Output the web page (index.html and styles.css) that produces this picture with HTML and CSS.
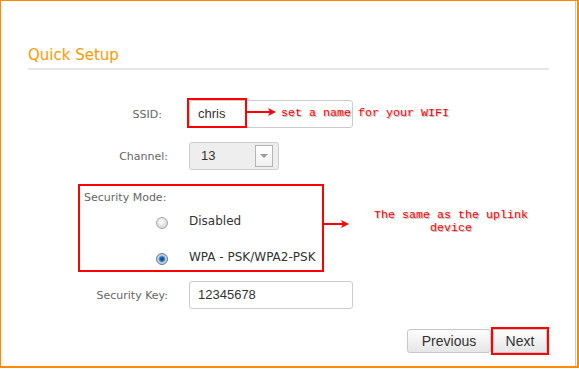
FILE: index.html
```html
<!DOCTYPE html>
<html>
<head>
<meta charset="utf-8">
<title>Quick Setup</title>
<link rel="stylesheet" href="styles.css">
</head>
<body>
<div class="frame">
  <div class="panel">
    <div class="content">
      <h1 class="title">Quick Setup</h1>

      <div class="row row-ssid">
        <div class="lbl lbl-ssid">SSID:</div>
        <div class="field">
          <div class="input">chris</div>
          <span class="hl-box"></span>
          <svg class="arrow arrow-ssid" width="32" height="10" viewBox="0 0 32 10">
            <line x1="0" y1="5" x2="26" y2="5" stroke="#f00" stroke-width="2"/>
            <polygon points="22,1 30,5 22,9 24,5" fill="#f00"/>
          </svg>
          <span class="note note-ssid">set a name for your WIFI</span>
        </div>
      </div>

      <div class="row row-channel">
        <div class="lbl">Channel:</div>
        <div class="select">
          <span class="select-val">13</span>
          <span class="select-btn"><span class="tri"></span></span>
        </div>
      </div>

      <div class="secbox">
        <div class="sec-title">Security Mode:</div>
        <div class="radio-row">
          <span class="radio"></span>
          <span class="radio-text">Disabled</span>
        </div>
        <div class="radio-row radio-row-2">
          <span class="radio radio-on"></span>
          <span class="radio-text">WPA - PSK/WPA2-PSK</span>
        </div>
        <svg class="arrow arrow-sec" width="28" height="10" viewBox="0 0 28 10">
          <line x1="0" y1="5" x2="22" y2="5" stroke="#f00" stroke-width="2"/>
          <polygon points="18,1 26,5 18,9 20,5" fill="#f00"/>
        </svg>
        <div class="note note-sec">The same as the uplink<br>device</div>
      </div>

      <div class="row row-key">
        <div class="lbl">Security Key:</div>
        <div class="field">
          <div class="input">12345678</div>
        </div>
      </div>

      <div class="buttons">
        <button class="btn btn-prev">Previous</button>
        <span class="next-wrap"><button class="btn btn-next">Next</button></span>
      </div>
    </div>
  </div>
</div>
</body>
</html>
```

FILE: styles.css
```css
* { box-sizing: border-box; }
html, body { margin: 0; padding: 0; background: #fff; }

.frame {
  width: 579px;
  height: 368px;
  border-style: solid;
  border-color: #ff8a00;
  border-width: 1px 2px 2px 1px;
}
.panel {
  width: 575px;
  height: 100%;
  border-right: 1px solid #c8c8c8;
}
.content {
  width: 548px;
  padding-left: 27px;
  padding-top: 45px;
}

.title {
  margin: 0;
  font-family: "DejaVu Sans", Verdana, sans-serif;
  font-weight: normal;
  font-size: 15px;
  line-height: 18px;
  color: #ff9900;
  padding-bottom: 4px;
  border-bottom: 2px solid #e6e6e6;
}

.row {
  display: flex;
  align-items: center;
  height: 28px;
}
.row-ssid { margin-top: 30px; }
.row-channel { margin-top: 14px; }
.row-key { margin-top: 9px; }

.lbl {
  width: 140px;
  margin-right: 21px;
  text-align: right;
  font-family: "DejaVu Sans", Verdana, sans-serif;
  font-size: 11px;
  color: #666;
}
.lbl-ssid { padding-right: 6px; }

.field { position: relative; }
.input {
  width: 164px;
  height: 28px;
  border: 1px solid #ccc;
  border-radius: 3px;
  padding-left: 8px;
  font-family: "Liberation Sans", Arial, sans-serif;
  font-size: 13px;
  line-height: 26px;
  color: #333;
  background: #fff;
}

.hl-box {
  position: absolute;
  left: -2px;
  top: -2px;
  width: 60px;
  height: 30px;
  border: 2px solid #f00;
}
.arrow { position: absolute; display: block; }
.arrow-ssid { left: 57px; top: 7px; }

.note {
  position: absolute;
  font-family: "Liberation Mono", "Courier New", monospace;
  font-size: 11.67px;
  color: #f00;
  text-shadow: 1px 1px 0 #bbb;
  white-space: nowrap;
}
.note-ssid { left: 92px; top: 6px; line-height: 14px; }

.select {
  display: flex;
  align-items: flex-start;
  justify-content: space-between;
  width: 90px;
  height: 28px;
  border: 1px solid #ccc;
  border-radius: 3px;
  background: #eee;
  padding: 2px 5px 0 11px;
  font-family: "Liberation Sans", Arial, sans-serif;
  font-size: 13px;
  color: #333;
}
.select-val { line-height: 22px; }
.select-btn {
  display: flex;
  align-items: center;
  justify-content: center;
  width: 18px;
  height: 22px;
  border: 1px solid #b4b4b4;
  background: linear-gradient(#fff, #f0f0f0);
}
.tri {
  width: 0;
  height: 0;
  border-left: 4px solid transparent;
  border-right: 4px solid transparent;
  border-top: 4px solid #999;
}

.secbox {
  position: relative;
  width: 246px;
  height: 88px;
  margin-top: 14px;
  margin-left: 50px;
  border: 2px solid #f00;
  padding-top: 5px;
}
.sec-title {
  padding-left: 4px;
  font-family: "DejaVu Sans", Verdana, sans-serif;
  font-size: 11px;
  line-height: 14px;
  color: #666;
}
.radio-row {
  display: flex;
  align-items: center;
  height: 22px;
  margin-top: 5px;
}
.radio-row-2 { margin-top: 14px; }
.radio {
  width: 12px;
  height: 12px;
  margin-left: 76px;
  margin-right: 21px;
  margin-top: 4px;
  border-radius: 50%;
  border: 1px solid #a8a8a8;
  background: radial-gradient(circle at 45% 40%, #fff 0, #f2f2f2 2px, #d4d4d4 6px);
}
.radio-on {
  border-color: #6c7a88;
  background: radial-gradient(circle at 50% 50%, #0b3f86 0, #1f66b8 2px, #6fa3d6 3px, #cfdbe7 4px, #b8c2cc 5.5px);
}
.radio-text {
  font-family: "DejaVu Sans", Verdana, sans-serif;
  font-size: 12px;
  color: #333;
}

.arrow-sec { left: calc(100% + 1px); top: 33px; }
.note-sec {
  left: 294px;
  top: 23px;
  line-height: 13px;
  text-align: center;
}

.buttons {
  display: flex;
  justify-content: flex-end;
  align-items: center;
  margin-top: 18px;
}
.btn {
  display: block;
  height: 24px;
  margin: 0;
  padding: 0;
  border: 1px solid #c8c8c8;
  border-radius: 3px;
  background: linear-gradient(#fdfdfd, #e6e6e6);
  font-family: "Liberation Sans", Arial, sans-serif;
  font-size: 14px;
  color: #333;
  line-height: 22px;
}
.btn-prev { width: 84px; }
.next-wrap {
  display: block;
  border: 2px solid #f00;
}
.btn-next { width: 54px; border-radius: 0; }
```
